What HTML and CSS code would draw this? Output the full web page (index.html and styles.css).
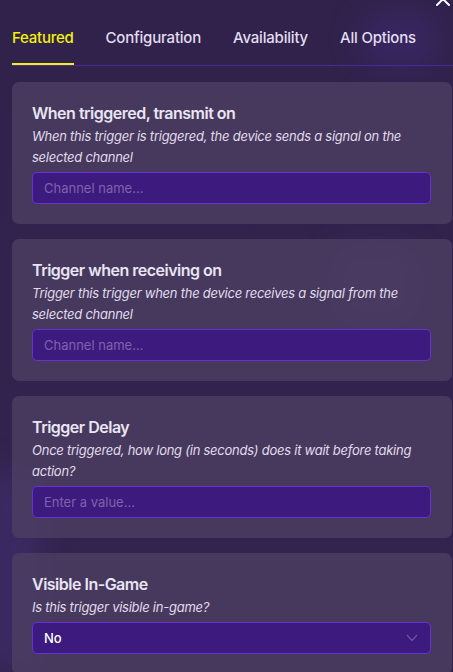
FILE: index.html
```html
<!DOCTYPE html>
<html>
<head>
<meta charset="utf-8">
<link rel="stylesheet" href="styles.css">
</head>
<body>
<div class="panel">
  <div class="bg-blob b1"></div>
  <div class="bg-blob b2"></div>
  <div class="bg-blob b3"></div>
  <svg class="close" width="16" height="16" viewBox="0 0 16 16"><path d="M2 2 L14 14 M14 2 L2 14" stroke="#ffffff" stroke-width="2" stroke-linecap="round"/></svg>
  <nav class="tabs">
    <span class="tab active">Featured</span>
    <span class="tab">Configuration</span>
    <span class="tab">Availability</span>
    <span class="tab">All Options</span>
  </nav>
  <div class="cards">
    <section class="card">
      <h2 class="title">When triggered, transmit on</h2>
      <p class="desc">When this trigger is triggered, the device sends a signal on the selected channel</p>
      <div class="field placeholder">Channel name...</div>
    </section>
    <section class="card">
      <h2 class="title">Trigger when receiving on</h2>
      <p class="desc">Trigger this trigger when the device receives a signal from the selected channel</p>
      <div class="field placeholder">Channel name...</div>
    </section>
    <section class="card">
      <h2 class="title">Trigger Delay</h2>
      <p class="desc">Once triggered, how long (in seconds) does it wait before taking action?</p>
      <div class="field placeholder">Enter a value...</div>
    </section>
    <section class="card">
      <h2 class="title">Visible In-Game</h2>
      <p class="desc">Is this trigger visible in-game?</p>
      <div class="field select"><span>No</span>
        <svg width="12" height="8" viewBox="0 0 12 8"><path d="M1 1 L6 6.5 L11 1" stroke="#6d55a3" stroke-width="1.2" fill="none"/></svg>
      </div>
    </section>
  </div>
</div>
</body>
</html>
```

FILE: styles.css
```css
* { box-sizing: border-box; }
html, body { margin: 0; padding: 0; }
body {
  width: 453px;
  height: 672px;
  overflow: hidden;
  background: #31234c;
  font-family: Inter, "Noto Sans", "Liberation Sans", sans-serif;
}
.panel {
  position: relative;
  width: 453px;
  height: 672px;
  overflow: hidden;
  background: linear-gradient(180deg, #30224b 0%, #33244f 100%);
}
.bg-blob {
  position: absolute;
  border-radius: 30px;
  filter: blur(14px);
}
.b1 { left: 360px; top: 10px; width: 80px; height: 60px; background: #382660; }
.b2 { left: 330px; top: 245px; width: 90px; height: 80px; background: #3a2a5a; }
.b3 { left: -20px; top: 470px; width: 60px; height: 200px; background: #3a2a62; }
.close {
  position: absolute;
  right: 2px;
  top: -9px;
}
.tabs {
  position: relative;
  display: flex;
  gap: 32px;
  margin-left: 12px;
  height: 66px;
  padding-top: 29px;
  border-bottom: 1px solid #4a26a2;
}
.tab {
  font-size: 15px;
  line-height: 18px;
  color: #e2ddef;
  font-weight: 500;
  height: 36px;
  letter-spacing: -0.2px;
}
.tab.active {
  color: #f5f208;
  font-weight: 500;
  letter-spacing: -0.25px;
  border-bottom: 2px solid #f5f208;
  margin-bottom: -1px;
}
.cards {
  position: relative;
  display: flex;
  flex-direction: column;
  gap: 15px;
  padding: 16px 1px 0 12px;
}
.card {
  background: rgba(76, 62, 98, 0.82);
  border-radius: 7px;
  padding: 19px 21px 20px 20px;
}
.title {
  margin: 0;
  font-size: 16px;
  line-height: 24px;
  font-weight: 600;
  color: #e9e5f2;
  letter-spacing: -0.5px;
}
.desc {
  margin: 1px 0 4px;
  font-size: 13px;
  line-height: 21px;
  font-style: italic;
  color: #e1dcec;
  letter-spacing: -0.25px;
}
.field {
  height: 32px;
  border: 1px solid #6632d4;
  border-radius: 5px;
  background: #3d1a7e;
  padding: 0 11px;
  display: flex;
  align-items: center;
  font-size: 13px;
}
.placeholder { color: #7d63ab; }
.select {
  color: #ffffff;
  justify-content: space-between;
  font-weight: 500;
}
.select svg { margin-right: 1px; }
```
